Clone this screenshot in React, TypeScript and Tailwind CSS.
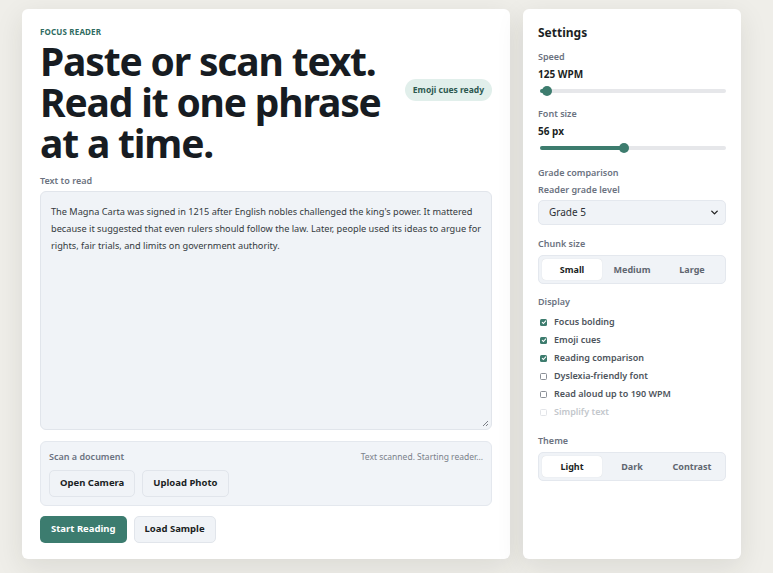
import { ChevronDown } from "lucide-react";

const font = { fontFamily: '"Noto Sans", "Open Sans", sans-serif' };

const displayOptions = [
  { label: "Focus bolding", checked: true },
  { label: "Emoji cues", checked: true },
  { label: "Reading comparison", checked: true },
  { label: "Dyslexia-friendly font", checked: false },
  { label: "Read aloud up to 190 WPM", checked: false },
  { label: "Simplify text", checked: false, disabled: true },
];

function Slider({ value }: { value: number }) {
  return (
    <div className="relative h-[10px] flex items-center">
      <div className="h-[4px] w-full rounded-full bg-[#e6e7ea]" />
      <div
        className="absolute left-0 h-[4px] rounded-full bg-[#3d7c6e]"
        style={{ width: `${value}%` }}
      />
      <div
        className="absolute w-[10px] h-[10px] -ml-[5px] rounded-full bg-[#3d7c6e]"
        style={{ left: `${value}%` }}
      />
    </div>
  );
}

function Segmented({ items, active }: { items: string[]; active: number }) {
  return (
    <div className="flex p-[3px] rounded-[5px] bg-[#f0f3f7] border border-[#e4e8ee]">
      {items.map((item, i) => (
        <div
          key={item}
          className={`flex-1 h-[21px] flex items-center justify-center rounded-[4px] text-[9px] font-bold ${
            i === active ? "bg-white text-[#1b1f24] shadow-[0_0_1px_rgba(0,0,0,0.15)]" : "text-[#5f6670]"
          }`}
        >
          {item}
        </div>
      ))}
    </div>
  );
}

function Label({ children }: { children: React.ReactNode }) {
  return <div className="text-[9px] font-semibold text-[#6b7280] leading-[12px]">{children}</div>;
}

function SoftButton({ children }: { children: React.ReactNode }) {
  return (
    <button className="h-[27px] px-[10px] rounded-[5px] bg-[#f0f3f7] border border-[#e1e5eb] text-[9.5px] font-bold text-[#1b1f24]">
      {children}
    </button>
  );
}

export default function App() {
  return (
    <div style={font} className="min-h-[573px] w-[773px] bg-[#efeee9] pl-[22px] pt-[9px] flex gap-[13px]">
      {/* main reader card */}
      <div className="w-[488px] h-[550px] bg-white rounded-[6px] shadow-[0_8px_28px_rgba(40,40,30,0.10)] px-[18px] pt-[18px]">
        <div className="text-[8px] font-bold tracking-[0.02em] text-[#2f6b5f] leading-[10px]">FOCUS READER</div>
        <div className="flex items-start justify-between mt-[3px]">
          <h1 className="text-[39px] font-bold leading-[41px] text-[#171c22] tracking-[-0.03em] whitespace-nowrap">
            Paste or scan text.
            <br />
            Read it one phrase
            <br />
            at a time.
          </h1>
          <div className="mt-[39px] h-[22px] px-[8px] rounded-full bg-[#e1efeb] text-[#2d5950] text-[8.5px] font-bold flex items-center">
            Emoji cues ready
          </div>
        </div>

        <div className="mt-[12px]">
          <Label>Text to read</Label>
        </div>
        <div className="relative mt-[4px] h-[239px] rounded-[6px] bg-[#f0f3f7] border border-[#e1e5eb] px-[10px] pt-[11px] text-[9.2px] leading-[17px] text-[#343a40] whitespace-nowrap">
          The Magna Carta was signed in 1215 after English nobles challenged the king's power. It mattered
          <br />
          because it suggested that even rulers should follow the law. Later, people used its ideas to argue for
          <br />
          rights, fair trials, and limits on government authority.
          <svg className="absolute right-[2px] bottom-[2px]" width="8" height="8" viewBox="0 0 8 8">
            <path d="M7 2 L2 7 M7 5 L5 7" stroke="#7b7f86" strokeWidth="1" />
          </svg>
        </div>

        <div className="mt-[11px] rounded-[6px] bg-[#f1f4f8] border border-[#e4e8ee] px-[8px] pt-[9px] pb-[8px]">
          <div className="flex justify-between items-center">
            <Label>Scan a document</Label>
            <div className="text-[8.5px] text-[#7b818a] leading-[12px]">Text scanned. Starting reader...</div>
          </div>
          <div className="flex gap-[7px] mt-[7px]">
            <SoftButton>Open Camera</SoftButton>
            <SoftButton>Upload Photo</SoftButton>
          </div>
        </div>

        <div className="flex gap-[7px] mt-[10px]">
          <button className="h-[27px] px-[11px] rounded-[5px] bg-[#3c7c6f] text-[9.5px] font-bold text-white">
            Start Reading
          </button>
          <SoftButton>Load Sample</SoftButton>
        </div>
      </div>

      {/* settings sidebar */}
      <div className="w-[218px] h-[550px] bg-white rounded-[6px] shadow-[0_8px_28px_rgba(40,40,30,0.10)] px-[15px] pt-[16px]">
        <div className="text-[12px] font-bold text-[#1b1f24] leading-[15px]">Settings</div>

        <div className="mt-[11px]">
          <Label>Speed</Label>
          <div className="text-[10px] font-bold text-[#1b1f24] mt-[5px] leading-[13px]">125 WPM</div>
          <div className="mt-[5px] pl-[2px]">
            <Slider value={4} />
          </div>
        </div>

        <div className="mt-[12px]">
          <Label>Font size</Label>
          <div className="text-[10px] font-bold text-[#1b1f24] mt-[5px] leading-[13px]">56 px</div>
          <div className="mt-[5px] pl-[2px]">
            <Slider value={45} />
          </div>
        </div>

        <div className="mt-[14px]">
          <Label>Grade comparison</Label>
          <div className="mt-[5px]">
            <Label>Reader grade level</Label>
          </div>
          <div className="mt-[4px] h-[25px] rounded-[5px] bg-[#f0f3f7] border border-[#e4e8ee] flex items-center justify-between pl-[10px] pr-[5px]">
            <span className="text-[10px] text-[#2b3036]">Grade 5</span>
            <ChevronDown size={11} strokeWidth={3} className="text-[#222]" />
          </div>
        </div>

        <div className="mt-[13px]">
          <Label>Chunk size</Label>
          <div className="mt-[5px]">
            <Segmented items={["Small", "Medium", "Large"]} active={0} />
          </div>
        </div>

        <div className="mt-[12px]">
          <Label>Display</Label>
          <div className="mt-[8px] flex flex-col gap-[6px] pl-[2px]">
            {displayOptions.map((opt) => (
              <div key={opt.label} className="flex items-center gap-[7px] h-[12px]">
                {opt.checked ? (
                  <span className="w-[7px] h-[7px] rounded-[1.5px] bg-[#3d7c6e] flex items-center justify-center">
                    <svg width="6" height="6" viewBox="0 0 6 6">
                      <path d="M1 3.1 L2.4 4.5 L5 1.6" fill="none" stroke="white" strokeWidth="1.1" />
                    </svg>
                  </span>
                ) : (
                  <span
                    className={`w-[7px] h-[7px] rounded-[1.5px] border ${
                      opt.disabled ? "border-[#e2e4e8]" : "border-[#8a8f96]"
                    }`}
                  />
                )}
                <span
                  className={`text-[9px] font-semibold ${opt.disabled ? "text-[#c3c7cc]" : "text-[#4d545c]"}`}
                >
                  {opt.label}
                </span>
              </div>
            ))}
          </div>
        </div>

        <div className="mt-[17px]">
          <Label>Theme</Label>
          <div className="mt-[5px]">
            <Segmented items={["Light", "Dark", "Contrast"]} active={0} />
          </div>
        </div>
      </div>
    </div>
  );
}
